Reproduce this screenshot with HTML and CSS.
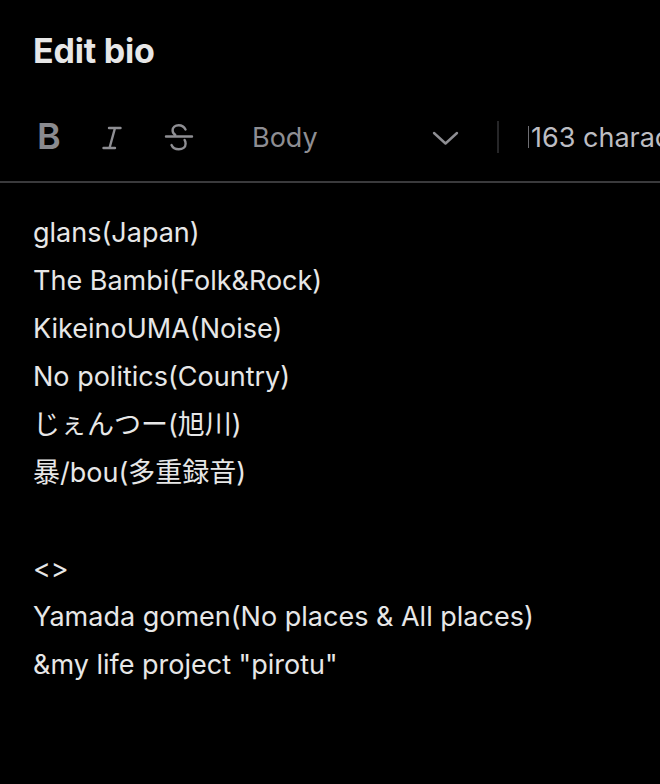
FILE: index.html
```html
<!DOCTYPE html>
<html>
<head>
<meta charset="utf-8">
<link rel="stylesheet" href="styles.css">
</head>
<body>
<div class="page">
  <h1 class="title">Edit bio</h1>
  <div class="toolbar">
    <span class="tool bold">B</span>
    <span class="tool italic">
      <svg width="20" height="24" viewBox="0 0 20 24"><path d="M7 2H18.5M1.5 22H13M13 2L7.5 22" stroke="#8e8e93" stroke-width="2.4" fill="none" stroke-linecap="round"/></svg>
    </span>
    <span class="tool strike">
      <svg width="30" height="30" viewBox="0 0 30 30"><path d="M21.5 7.5C20 4.5 18 3.2 14.7 3.2C11.2 3.2 8.6 5.3 8.6 8.3C8.6 10.4 9.6 11.8 11.2 12.8M2 14.5H28M20.6 18C21.3 19 21.6 20.3 21.6 21.7C21.6 25.2 18.6 27.3 14.8 27.3C11 27.3 8.6 25.6 7.5 23" stroke="#8e8e93" stroke-width="2.4" fill="none" stroke-linecap="round"/></svg>
    </span>
    <div class="select">
      <span class="select-label">Body</span>
      <svg class="chev" width="27" height="16" viewBox="0 0 27 16"><path d="M2 3L13.5 13.5L25 3" stroke="#8e8e93" stroke-width="2.4" fill="none" stroke-linecap="round" stroke-linejoin="round"/></svg>
    </div>
    <span class="vsep"></span>
    <span class="count"><span class="caret"></span>163 characters remaining</span>
  </div>
  <div class="bio">
    <div class="line">glans(Japan)</div>
    <div class="line">The Bambi(Folk&amp;Rock)</div>
    <div class="line">KikeinoUMA(Noise)</div>
    <div class="line">No politics(Country)</div>
    <div class="line">じぇんつー(旭川)</div>
    <div class="line">暴/bou(多重録音)</div>
    <div class="line">&nbsp;</div>
    <div class="line">&lt;&gt;</div>
    <div class="line">Yamada gomen(No places &amp; All places)</div>
    <div class="line">&amp;my life project "pirotu"</div>
  </div>
</div>
</body>
</html>
```
FILE: styles.css
```css
html, body {
  margin: 0;
  padding: 0;
  background: #000;
}
body {
  width: 660px;
  height: 784px;
  overflow: hidden;
  font-family: Inter, "Noto Sans CJK JP", sans-serif;
}
.page {
  width: 660px;
}
.title {
  margin: 0;
  padding: 30px 0 0 33px;
  height: 42px;
  line-height: 42px;
  font-size: 34px;
  font-weight: 700;
  color: #e7e7e7;
  letter-spacing: -0.2px;
}
.toolbar {
  margin-top: 21px;
  height: 90px;
  border-bottom: 2px solid #3a3a3c;
  display: flex;
  align-items: center;
  white-space: nowrap;
  overflow: hidden;
  padding-left: 37px;
  box-sizing: border-box;
}
.tool {
  display: flex;
  align-items: center;
  flex-shrink: 0;
  color: #8e8e93;
}
.bold {
  font-size: 36px;
  font-weight: 600;
  width: 24px;
  margin-right: 41px;
  margin-top: -2px;
  color: #8a8a8e;
}
.italic {
  margin-right: 42px;
  margin-top: 1px;
}
.strike {
  margin-right: 58px;
}
.select {
  display: flex;
  align-items: center;
  flex-shrink: 0;
  width: 207px;
  justify-content: space-between;
}
.select-label {
  font-size: 27px;
  color: #8e8e93;
}
.chev {
  margin-top: 2px;
}
.vsep {
  flex-shrink: 0;
  width: 2px;
  height: 32px;
  background: #262628;
  margin-left: 38px;
  margin-right: 29px;
}
.count {
  font-size: 27px;
  color: #bdbdc2;
  display: flex;
  align-items: center;
  flex-shrink: 0;
}
.caret {
  width: 1px;
  height: 22px;
  background: #6e6e73;
  margin-right: 2px;
}
.bio {
  padding: 26px 0 0 33px;
}
.line {
  font-size: 27px;
  line-height: 48px;
  color: #e7e7e7;
  height: 48px;
  white-space: nowrap;
}
```
